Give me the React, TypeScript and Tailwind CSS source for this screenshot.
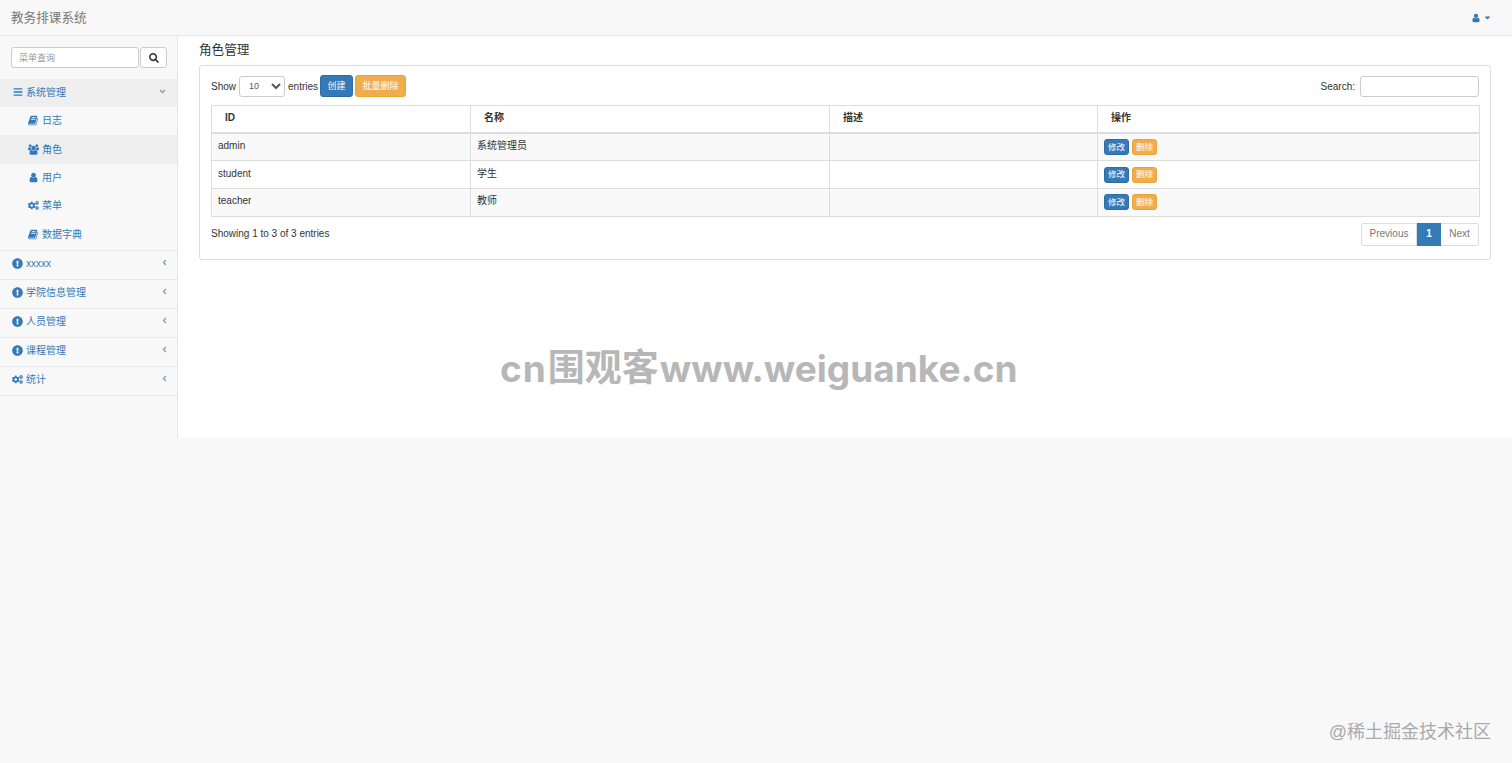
import {
  FaAngleDown,
  FaAngleLeft,
  FaBars,
  FaCaretDown,
  FaCogs,
  FaExclamationCircle,
  FaSearch,
} from "react-icons/fa";

type IconProps = { className?: string };

// Font Awesome 4 glyphs, the newer set in react-icons draws these differently
function BookIcon({ className }: IconProps) {
  return (
    <svg viewBox="0 0 1792 1792" fill="currentColor" className={className}>
      <path d="M1639 478q40 57 18 129l-275 906q-19 64-76.5 107.5t-122.5 43.5h-923q-77 0-148.5-53.5t-99.5-131.5q-24-67-2-127 0-4 3-27t4-37q1-8-3-21.5t-3-19.5q2-11 8-21t16.5-23.5 16.5-23.5q23-38 45-91.5t30-91.5q3-10 .5-30t-.5-28q3-11 17-28t17-23q21-36 42-92t25-90q1-9-2.5-32t.5-28q4-13 22-30.5t22-22.5q19-26 42.5-84.5t27.5-96.5q1-8-3-25.5t-2-26.5q2-8 9-18t18-23 17-21q8-12 16.5-30.5t15-35 16-36 19.5-32 26.5-23.5 36-11.5 47.5 5.5l-1 3q38-9 51-9h761q74 0 114 56t18 130l-274 906q-36 119-71.5 153.5t-128.5 34.5h-869q-27 0-38 15-11 16-1 43 24 70 144 70h923q29 0 56-15.5t35-41.5l300-987q7-22 5-57 38 15 59 43zm-1064 2q-4 13 2 22.5t20 9.5h608q13 0 25.5-9.5t16.5-22.5l21-64q4-13-2-22.5t-20-9.5h-608q-13 0-25.5 9.5t-16.5 22.5zm-83 256q-4 13 2 22.5t20 9.5h608q13 0 25.5-9.5t16.5-22.5l21-64q4-13-2-22.5t-20-9.5h-608q-13 0-25.5 9.5t-16.5 22.5z" />
    </svg>
  );
}

function UserIcon({ className }: IconProps) {
  return (
    <svg viewBox="0 0 1792 1792" fill="currentColor" className={className}>
      <path d="M1536 1399q0 109-62.5 187t-150.5 78h-854q-88 0-150.5-78t-62.5-187q0-85 8.5-160.5t31.5-152 58.5-131 94-89 134.5-34.5q131 128 313 128t313-128q76 0 134.5 34.5t94 89 58.5 131 31.5 152 8.5 160.5zm-256-887q0 159-112.5 271.5t-271.5 112.5-271.5-112.5-112.5-271.5 112.5-271.5 271.5-112.5 271.5 112.5 112.5 271.5z" />
    </svg>
  );
}

function UsersIcon({ className }: IconProps) {
  return (
    <svg viewBox="0 0 1920 1792" fill="currentColor" className={className}>
      <path d="M593 896q-162 5-265 128h-134q-82 0-138-40.5t-56-118.5q0-353 124-353 6 0 43.5 21t97.5 42.5 119 21.5q67 0 133-23-5 37-5 66 0 139 81 256zm1071 637q0 120-73 189.5t-194 69.5h-874q-121 0-194-69.5t-73-189.5q0-53 3.5-103.5t14-109 26.5-108.5 43-97.5 62-81 85.5-53.5 111.5-20q10 0 43 21.5t73 48 107 48 135 21.5 135-21.5 107-48 73-48 43-21.5q61 0 111.5 20t85.5 53.5 62 81 43 97.5 26.5 108.5 14 109 3.5 103.5zm-1024-1277q0 106-75 181t-181 75-181-75-75-181 75-181 181-75 181 75 75 181zm704 384q0 159-112.5 271.5t-271.5 112.5-271.5-112.5-112.5-271.5 112.5-271.5 271.5-112.5 271.5 112.5 112.5 271.5zm576 225q0 78-56 118.5t-138 40.5h-134q-103-123-265-128 81-117 81-256 0-29-5-66 66 23 133 23 59 0 119-21.5t97.5-42.5 43.5-21q124 0 124 353zm-128-609q0 106-75 181t-181 75-181-75-75-181 75-181 181-75 181 75 75 181z" />
    </svg>
  );
}

const subItems = [
  { label: "日志", icon: <BookIcon className="w-[11px] h-[11px]" />, active: false },
  { label: "角色", icon: <UsersIcon className="w-[11px] h-[11px]" />, active: true },
  { label: "用户", icon: <UserIcon className="w-[11px] h-[11px]" />, active: false },
  { label: "菜单", icon: <FaCogs className="w-[11px] h-[11px]" />, active: false },
  { label: "数据字典", icon: <BookIcon className="w-[11px] h-[11px]" />, active: false },
];

const groups = [
  { label: "xxxxx", icon: FaExclamationCircle },
  { label: "学院信息管理", icon: FaExclamationCircle },
  { label: "人员管理", icon: FaExclamationCircle },
  { label: "课程管理", icon: FaExclamationCircle },
  { label: "统计", icon: FaCogs },
];

const rows = [
  { id: "admin", name: "系统管理员" },
  { id: "student", name: "学生" },
  { id: "teacher", name: "教师" },
];

function Sidebar() {
  return (
    <aside className="w-[177px] shrink-0">
      <div className="flex pl-[11px] pt-[11px] pb-[11px] h-[43px]">
        <input
          placeholder="菜单查询"
          className="w-[128px] h-[21px] rounded-[3px] border border-[#ccc] bg-white pl-[7px] text-[9px] placeholder:text-[#999] outline-none"
        />
        <button className="ml-[1px] w-[27px] h-[21px] rounded-[3px] border border-[#ccc] bg-white flex items-center justify-center text-[#333] text-[10px]">
          <FaSearch />
        </button>
      </div>

      <div className="border-b border-[#e7e7e7] pb-[1px]">
        <div className="h-[28px] bg-[#eeeeee] flex items-center pl-[13px] pr-[10px] pb-[2px] text-[#337ab7]">
          <FaBars className="text-[10px] w-[10px]" />
          <span className="ml-[3px] text-[10px]">系统管理</span>
          <FaAngleDown className="ml-auto text-[9px] mb-[2px] text-[#7f9fbd]" />
        </div>
        {subItems.map((item) => (
          <div
            key={item.label}
            className={`h-[28.4px] flex items-center pl-[28px] pb-[1px] text-[#337ab7] ${
              item.active ? "bg-[#eeeeee]" : ""
            }`}
          >
            {item.icon}
            <span className="ml-[3px] text-[10px]">{item.label}</span>
          </div>
        ))}
      </div>

      {groups.map((group) => (
        <div
          key={group.label}
          className="h-[29px] border-b border-[#e7e7e7] flex items-center pl-[12px] pr-[8px] pb-[2px] text-[#337ab7]"
        >
          <group.icon className="text-[11px] w-[11px]" />
          <span className="ml-[3px] text-[10px]">{group.label}</span>
          <FaAngleLeft className="ml-auto text-[9px] mb-[2px] text-[#8a9fb3]" />
        </div>
      ))}
    </aside>
  );
}

function RoleTable() {
  return (
    <table className="w-[1268px] table-fixed border-collapse border border-[#ddd] text-[10px] text-[#333]">
      <colgroup>
        <col className="w-[259px]" />
        <col className="w-[359px]" />
        <col className="w-[268px]" />
        <col className="w-[382px]" />
      </colgroup>
      <thead>
        <tr className="h-[27.5px] border-b-2 border-[#ddd] font-bold">
          {["ID", "名称", "描述", "操作"].map((title) => (
            <th key={title} className="border border-[#ddd] pl-[13px] pb-[3px] text-left font-bold">
              {title}
            </th>
          ))}
        </tr>
      </thead>
      <tbody>
        {rows.map((row, i) => (
          <tr key={row.id} className={`h-[27.8px] ${i % 2 === 0 ? "bg-[#f9f9f9]" : "bg-white"}`}>
            <td className="border border-[#ddd] pl-[6px] pb-[3px]">{row.id}</td>
            <td className="border border-[#ddd] pl-[6px] pb-[3px]">{row.name}</td>
            <td className="border border-[#ddd]" />
            <td className="border border-[#ddd] pl-[6px]">
              <div className="flex gap-[3px]">
                <button className="w-[25px] h-[16px] rounded-[3px] bg-[#337ab7] border border-[#2e6da4] text-white text-[8.5px] leading-none">
                  修改
                </button>
                <button className="w-[25px] h-[16px] rounded-[3px] bg-[#f0ad4e] border border-[#eea236] text-white text-[8.5px] leading-none">
                  删除
                </button>
              </div>
            </td>
          </tr>
        ))}
      </tbody>
    </table>
  );
}

function RolePanel() {
  return (
    <div className="w-[1292px] h-[195px] rounded-[3px] border border-[#ddd] bg-white pl-[11px] pr-[11px] pt-[9px]">
      <div className="flex items-center h-[22px] mb-[8px] text-[10px] text-[#333]">
        <span>Show</span>
        <select className="ml-[3px] w-[46px] h-[21px] rounded-[3px] border border-[#ccc] bg-white pl-[5px] text-[9px] text-[#555] outline-none">
          <option>10</option>
        </select>
        <span className="ml-[3px]">entries</span>
        <button className="ml-[2px] w-[33px] h-[22px] pt-[2px] rounded-[3px] bg-[#337ab7] border border-[#2e6da4] text-white text-[9px]">
          创建
        </button>
        <button className="ml-[2px] w-[51px] h-[22px] pt-[2px] rounded-[3px] bg-[#f0ad4e] border border-[#eea236] text-white text-[9px]">
          批量删除
        </button>
        <span className="ml-auto">Search:</span>
        <input className="ml-[5px] w-[119px] h-[21px] rounded-[3px] border border-[#ccc] bg-white outline-none" />
      </div>

      <RoleTable />

      <div className="flex items-start justify-between pt-[6px] text-[10px]">
        <span className="pt-[3px] text-[#333]">Showing 1 to 3 of 3 entries</span>
        <div className="flex h-[23px] items-stretch">
          <span className="w-[56px] pb-[1px] rounded-l-[3px] border border-[#ddd] bg-white text-[#777] flex items-center justify-center">
            Previous
          </span>
          <span className="w-[24px] pb-[1px] bg-[#337ab7] border border-[#337ab7] text-white font-bold flex items-center justify-center">
            1
          </span>
          <span className="w-[38px] pb-[1px] rounded-r-[3px] border border-[#ddd] border-l-0 bg-white text-[#777] flex items-center justify-center">
            Next
          </span>
        </div>
      </div>
    </div>
  );
}

export default function App() {
  return (
    <div
      className="relative h-[763px] overflow-hidden bg-[#f8f8f8]"
      style={{ fontFamily: '"Liberation Sans", "Noto Sans CJK SC", sans-serif' }}
    >
      <header className="h-[36px] border-b border-[#e7e7e7] flex items-center justify-between pl-[11px] pr-[20px]">
        <span className="pt-[1px] text-[12.6px] text-[#777]">教务排课系统</span>
        <span className="flex items-center gap-[2px] text-[#337ab7]">
          <UserIcon className="w-[10px] h-[10px]" />
          <FaCaretDown className="text-[9px]" />
        </span>
      </header>

      <div className="flex h-[402px]">
        <Sidebar />
        <main className="flex-1 bg-white border-l border-[#e7e7e7] pl-[21px]">
          <h1 className="h-[29px] pt-[5px] text-[12.6px] leading-[18px] font-normal text-[#333]">角色管理</h1>
          <RolePanel />
        </main>
      </div>

      {/* Watermarks stamped over the page */}
      <div className="absolute left-[500px] top-[347px] h-[44px] flex items-center whitespace-nowrap font-bold text-[#b7b7b7]">
        <span className="font-['Inter'] text-[37px] tracking-[1px]">cn</span>
        <span className="text-[37px] ml-[1px]">围观客</span>
        <span className="font-['Inter'] text-[37px] ml-[1px]">www.weiguanke.cn</span>
      </div>
      <div className="absolute right-[21px] top-[720px] text-[18px] leading-[24px] whitespace-nowrap text-[#aaaaaa]">
        @稀土掘金技术社区
      </div>
    </div>
  );
}
